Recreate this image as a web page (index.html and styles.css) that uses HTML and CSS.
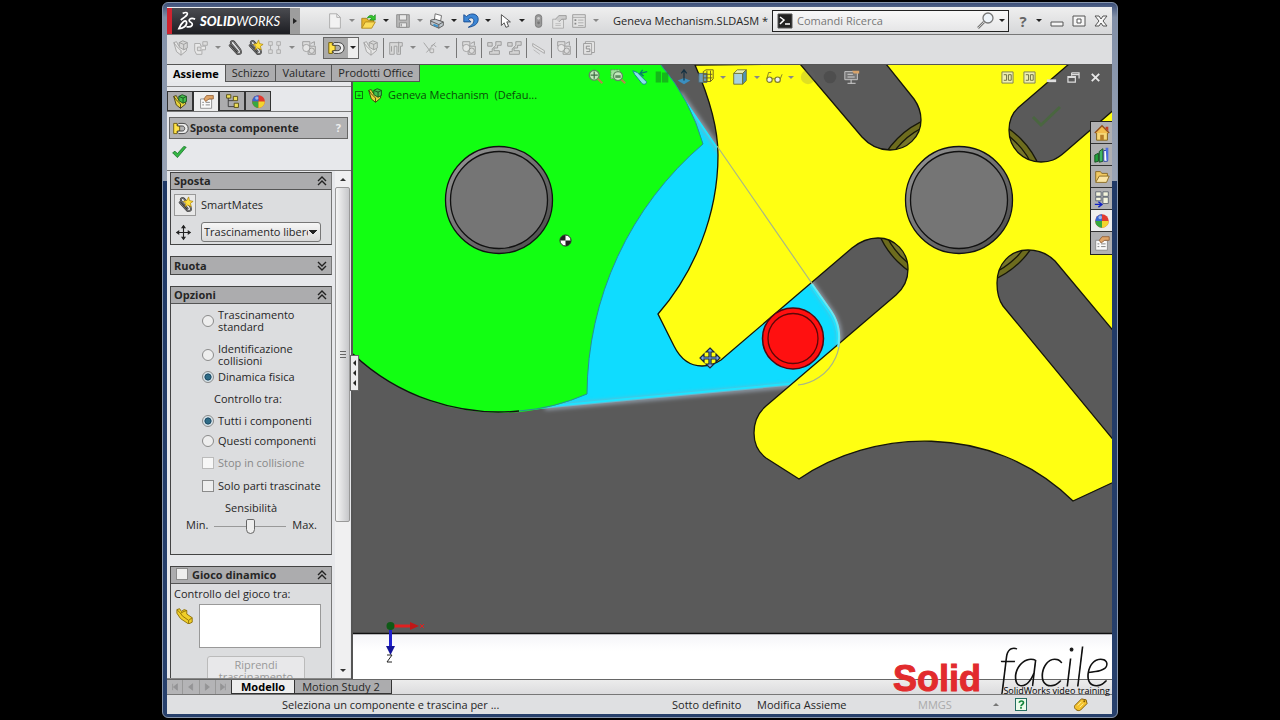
FILE: index.html
```html
<!DOCTYPE html>
<html lang="it">
<head>
<meta charset="utf-8">
<title>Geneva Mechanism.SLDASM</title>
<link rel="stylesheet" href="styles.css">
</head>
<body>
<svg class="defs" aria-hidden="true">
  <symbol id="doc" viewBox="0 0 20 20"><path d="M4 2h8l4 4v12H4z" fill="#f2f2f2" stroke="#aaa"/><path d="M12 2v4h4" fill="none" stroke="#aaa"/></symbol>
  <symbol id="open" viewBox="0 0 20 20"><path d="M2 18V7h5l2 2h6v3" fill="#e8b52c" stroke="#a98420"/><path d="M2 18l4-7h11l-4 7z" fill="#fbdc5a" stroke="#b28a1c"/><path d="M8 7c2-4 5-4 7-2l2-2v6h-6l2-2c-2-1-3-1-5 0z" fill="#35c52f" stroke="#17851a" stroke-width=".7"/></symbol>
  <symbol id="save" viewBox="0 0 20 20"><path d="M3 3h14v14H3z" fill="#b9b9b9" stroke="#8b8b8b"/><path d="M6 3h8v6H6zM6 12h8v5H6z" fill="#e8e8e8" stroke="#8b8b8b"/><path d="M8 13v3" stroke="#777"/></symbol>
  <symbol id="print" viewBox="0 0 20 20"><path d="M7 9l1-7 7 2-1 6z" fill="#fff" stroke="#666"/><path d="M3 9l5-1 9 3v4l-5 3-9-4z" fill="#c0c8ce" stroke="#555"/><path d="M3 10l9 4 5-3M12 14v4" fill="none" stroke="#555"/><path d="M6 14l5 2" stroke="#3c91c8" stroke-width="2"/></symbol>
  <symbol id="undo" viewBox="0 0 20 20"><path d="M2 3v8h8L7 8c3-3 7-1 6 3-1 3-3 4-6 6 7-1 11-4 11-9 0-6-8-8-13-3z" fill="#3d87d6" stroke="#16498e"/></symbol>
  <symbol id="arrow" viewBox="0 0 20 20"><path d="M6 3v12l3-3 2 5 3-1-2-5h4z" fill="#fff" stroke="#444"/></symbol>
  <symbol id="light" viewBox="0 0 20 20"><rect x="6" y="3" width="7" height="14" rx="3" fill="#999" stroke="#777"/><circle cx="9.500" cy="7" r="1.500" fill="#ccc"/><circle cx="9.500" cy="12" r="1.500" fill="#777"/></symbol>
  <symbol id="hand" viewBox="0 0 20 20"><path d="M3 8h12v10H3z" fill="#e3e3e3" stroke="#aaa"/><path d="M6 8l4-4h8v4h-5l-3 3" fill="#ccc" stroke="#999"/><path d="M6 13h6M6 15h6" stroke="#bbb"/></symbol>
  <symbol id="list" viewBox="0 0 20 20"><path d="M3 3h14v14H3z" fill="#e3e3e3" stroke="#999"/><path d="M3 6h14M9 9h6M9 12h6M9 15h6" stroke="#aaa"/><path d="M5 8h2v2H5zM5 12h2v2H5z" fill="#888"/></symbol>
  <symbol id="search" viewBox="0 0 20 20"><circle cx="12" cy="7" r="5" fill="#eef4fa" stroke="#777" stroke-width="1.300"/><path d="M8 11l-6 6" stroke="#777" stroke-width="2.500"/><path d="M8 11l-6 6" stroke="#ccc"/></symbol>
  <symbol id="cmd" viewBox="0 0 16 16"><path d="M1 1h14v14H1z" fill="#222" stroke="#555"/><path d="M3 4l4 3-4 4M8 11h5" fill="none" stroke="#fff" stroke-width="1.500"/></symbol>
  <symbol id="part" viewBox="0 0 20 20"><path d="M2 4l3-1 2 4 4 3 5-2v5l-6 5-5-4z" fill="#e6e6e6" stroke="#a2a2a2"/><path d="M2 4l3 4 5 5v5" fill="none" stroke="#a2a2a2"/><path d="M8 4l4-2 5 2v6l-4 2-5-3z" fill="#d6d6d6" stroke="#9c9c9c"/><path d="M8 4l5 2 4-2M13 6v6" fill="none" stroke="#9c9c9c"/></symbol>
  <symbol id="parts" viewBox="0 0 20 20"><path d="M3 5h6l1 3h5v4h-4v5H5l-2-4z" fill="#e9e9e9" stroke="#a8a8a8"/><path d="M12 3h5v4h-5zM6 9h4v4H6z" fill="#ddd" stroke="#a8a8a8"/></symbol>
  <symbol id="clip" viewBox="0 0 20 20"><g fill="none" stroke-linecap="round"><path d="M13 14L6 6c-2-3 1-5 3-3l7 9c2 4-1 6-4 4L4 7" stroke="#333" stroke-width="2"/><path d="M13 14L6 6c-2-3 1-5 3-3l7 9c2 4-1 6-4 4L4 7" stroke="#bbb" stroke-width=".6"/></g></symbol>
  <symbol id="clipstar" viewBox="0 0 20 20"><use href="#clip"/><path d="M14 1l1 4 4 1-3 2 1 4-4-2-3 2 1-4-3-2 4-1z" fill="#ffe03a" stroke="#a67a00" stroke-width=".7"/></symbol>
  <symbol id="grid" viewBox="0 0 20 20"><path d="M3 3h4v4H3zM12 3h4v4h-4zM3 12h4v4H3zM12 12h4v4h-4zM5 7v5M14 7v5" fill="#ddd" stroke="#aaa"/></symbol>
  <symbol id="move" viewBox="0 0 20 20"><path d="M2 4h4v3h3v6H6v3H2z" fill="#ffe34a" stroke="#6c5700"/><path d="M8 4h5c4 0 6 3 6 6s-2 6-6 6H8l-2-2 2-1h4c4 0 4-6 0-6H8L6 6z" fill="#eee" stroke="#333"/></symbol>
  <symbol id="gears" viewBox="0 0 20 20"><path d="M3 3h8v5H3zM9 8h8v9H9z" fill="#ddd" stroke="#999"/><circle cx="7" cy="10" r="4" fill="#e6e6e6" stroke="#a0a0a0"/><circle cx="13" cy="13" r="3" fill="none" stroke="#999"/><path d="M12 5l4-2v4" fill="none" stroke="#999"/></symbol>
  <symbol id="slot" viewBox="0 0 20 20"><path d="M3 4h14v4h-2v9h-4V8H8v9H3z" fill="#d8d8d8" stroke="#9c9c9c"/><path d="M5 8v6M13 3v12" stroke="#999"/></symbol>
  <symbol id="axis" viewBox="0 0 20 20"><path d="M3 4l9 12M16 4L6 15M11 8l3-2 3 3" fill="none" stroke="#a0a0a0"/><path d="M10 11h4v4h-4z" fill="#ddd" stroke="#aaa"/></symbol>
  <symbol id="explode" viewBox="0 0 20 20"><path d="M3 4h5v4H3zM12 3h6v4h-4v3h-4v3h6v4H5v-3h3v-3l4-4z" fill="#d4d4d4" stroke="#979797"/></symbol>
  <symbol id="measure" viewBox="0 0 20 20"><path d="M3 5l13 8v3L3 8z" fill="#e4e4e4" stroke="#a5a5a5"/><path d="M4 12l7 5" stroke="#b5b5b5"/></symbol>
  <symbol id="sheet" viewBox="0 0 20 20"><path d="M6 3h10v12H6z" fill="#eee" stroke="#999"/><path d="M4 5h9v12H4z" fill="#e3e3e3" stroke="#999"/><path d="M11 8H7v3h4v3H7" fill="none" stroke="#888"/></symbol>
  <symbol id="asm" viewBox="0 0 20 20"><path d="M2 4l3-1 2 4 4 3 5-2v5l-6 5-5-4z" fill="#e8d33a" stroke="#3e3512"/><path d="M2 4l3 4 5 5v5" fill="none" stroke="#3e3512"/><path d="M8 4l4-2 5 2v6l-4 2-5-3z" fill="#45bd4e" stroke="#134c18"/><path d="M8 4l5 2 4-2M13 6v6" fill="none" stroke="#134c18"/></symbol>
  <symbol id="prop" viewBox="0 0 20 20"><path d="M3 7h13v11H3z" fill="#fafafa" stroke="#888"/><path d="M5 11h2M9 11h5M5 14h2M9 14h5" stroke="#777"/><path d="M7 7l3-4h8v4h-5l-4 3z" fill="#e0a568" stroke="#946239"/></symbol>
  <symbol id="tree" viewBox="0 0 20 20"><path d="M5 3v13h7M5 9h6" fill="none" stroke="#333"/><path d="M3 2h5v4H3zM11 4h5v5h-5zM12 12h5v5h-5z" fill="#efe05a" stroke="#4b430f"/></symbol>
  <symbol id="ball" viewBox="0 0 20 20"><circle cx="10" cy="10" r="7.500" fill="#e13a30"/><path d="M10 10V2.500A7.500 7.500 0 0 0 2.500 10z" fill="#3768d0"/><path d="M10 10H2.500A7.500 7.500 0 0 0 10 17.500z" fill="#37a83f"/><path d="M10 10v7.500A7.500 7.500 0 0 0 17.500 10z" fill="#f2d52f"/><circle cx="8" cy="6" r="2" fill="#fff" opacity=".5"/></symbol>
  <symbol id="check" viewBox="0 0 20 20"><path d="M2 11l3-2 3 3 8-9 3 1-11 13z" fill="#35b745" stroke="#147426"/></symbol>
  <symbol id="cross" viewBox="0 0 20 20"><path d="M10 2v16M2 10h16" stroke="#222" stroke-width="1.300"/><path d="M10 1l3 4H7zM10 19l3-4H7zM1 10l4-3v6zM19 10l-4-3v6z" fill="#222"/></symbol>
  <symbol id="yellowpart" viewBox="0 0 20 20"><path d="M1 4l3-1 2 3 3-2 3 1v4l6 4v5l-4 2-9-6-4-6z" fill="#f0cf2a" stroke="#8b6d06"/><path d="M1 4l4 4 2 3 7 5v4M14 16l4-3M5 8l4-2 3-1" fill="none" stroke="#8b6d06"/></symbol>
  <symbol id="up" viewBox="0 0 12 12"><path d="M2 6l4-4 4 4M2 10l4-4 4 4" fill="none" stroke="#222" stroke-width="1.400"/></symbol>
  <symbol id="down" viewBox="0 0 12 12"><path d="M2 2l4 4 4-4M2 6l4 4 4-4" fill="none" stroke="#222" stroke-width="1.400"/></symbol>
  <symbol id="zoomfit" viewBox="0 0 20 20"><circle cx="8" cy="8" r="5.500" fill="#c3e8bd" stroke="#5d8c60" stroke-width="1.600"/><path d="M8 4v8M4 8h8" stroke="#3f6a45" stroke-width="1.300"/><path d="M12 12l5 5" stroke="#b4874d" stroke-width="2.500"/></symbol>
  <symbol id="zoombox" viewBox="0 0 20 20"><path d="M2 2h10v10H2z" fill="#9fe29b" stroke="#5d8c60" stroke-dasharray="2 1"/><circle cx="10" cy="9" r="5" fill="#c3e8bd" stroke="#5d8c60" stroke-width="1.500"/><path d="M7 8h6v3H7z" fill="#5d8c60"/><path d="M14 13l4 4" stroke="#b4874d" stroke-width="2.500"/></symbol>
  <symbol id="prev" viewBox="0 0 20 20"><path d="M2 3l5 2 10 10c1 3-3 4-5 2L4 7z" fill="#8be0ed" stroke="#147f92"/><path d="M10 6l8-2M13 2l-3 4 4 3" fill="none" stroke="#0a7a6e" stroke-width="1.500"/></symbol>
  <symbol id="section" viewBox="0 0 20 20"><path d="M3 4h6v12H3zM10 5h7v11h-7z" fill="#188b20" opacity=".6"/></symbol>
  <symbol id="normal" viewBox="0 0 20 20"><path d="M3 14l7-3 7 3-7 4z" fill="#3a8fc0"/><path d="M10 14V3M7 6l3-4 3 4" fill="none" stroke="#133042" stroke-width="1.300"/></symbol>
  <symbol id="views" viewBox="0 0 20 20"><path d="M2 6h9v10H2z" fill="#6e9dbb" stroke="#4d6975"/><path d="M7 4l3-2h8v10l-3 3H7zM7 7h10M11 3v12M15 3v12M7 11h10" fill="none" stroke="#6a5d20"/></symbol>
  <symbol id="cube" viewBox="0 0 20 20"><path d="M3 6h10v12H3z" fill="#a7d0df" stroke="#6d7130"/><path d="M3 6l4-4h10l-4 4z" fill="#e9efb0" stroke="#6d7130"/><path d="M13 6l4-4v12l-4 4z" fill="#4e94bb" stroke="#6d7130"/></symbol>
  <symbol id="glasses" viewBox="0 0 20 20"><circle cx="5" cy="13" r="3" fill="#eee" stroke="#7e7c26" stroke-width="1.300"/><circle cx="14" cy="13" r="3" fill="#eee" stroke="#7e7c26" stroke-width="1.300"/><path d="M8 12h3M2 12l2-7h3M17 12l2-5" fill="none" stroke="#7e7c26"/></symbol>
  <symbol id="screen" viewBox="0 0 20 20"><path d="M2 4h14v9H2z" fill="#777" stroke="#ccc"/><path d="M5 7h6M5 10h8M9 13v4M5 17h9" stroke="#ddd"/><path d="M10 3h8v3h-6" fill="#d8a36a"/></symbol>
  <symbol id="home" viewBox="0 0 20 20"><path d="M4 9v9h12V9" fill="#f6d777" stroke="#7d5a10"/><path d="M2 10l8-8 8 8" fill="#f3bd4d" stroke="#91501a" stroke-width="1.500"/><path d="M8 12h4v6H8z" fill="#b67d29"/><path d="M14 3h3v5l-3-3z" fill="#bf3d22"/></symbol>
  <symbol id="library" viewBox="0 0 20 20"><path d="M2 10l4-2v9l-4 1z" fill="#22a03a" stroke="#164d20"/><path d="M7 6l4-3v14l-4 1z" fill="#3fb765" stroke="#164d20"/><path d="M12 5h4v12h-4z" fill="#fff" stroke="#223b9d"/><path d="M14 2h3v14h-2z" fill="#4b6ce0"/></symbol>
  <symbol id="folder" viewBox="0 0 20 20"><path d="M3 15V4h5l2 2h6v4" fill="#f1c962" stroke="#86661e"/><path d="M3 16l4-7h11l-3 7z" fill="#fbe5a4" stroke="#86661e"/></symbol>
  <symbol id="palette" viewBox="0 0 20 20"><path d="M3 2h6v5H3zM11 2h6v5h-6zM3 8h6v4H3zM11 8h6v7h-6z" fill="#f3f3dc" stroke="#5b6370"/><path d="M2 16h7M6 13l4 3-4 3" fill="none" stroke="#1020c4" stroke-width="1.500"/></symbol>
  <symbol id="pane" viewBox="0 0 14 14"><path d="M1 1h12v12H1z" fill="#efefb0" stroke="#777b53"/><path d="M3 4h3v6H3M8 4h3v6H8z" fill="none" stroke="#66683e"/></symbol>
  <symbol id="winmin" viewBox="0 0 14 14"><path d="M1 8h12v4H1z" fill="#f5f5f5" stroke="#555"/></symbol>
  <symbol id="winmax" viewBox="0 0 14 14"><path d="M1 2h12v10H1z" fill="#f5f5f5" stroke="#555"/><path d="M5 5h4v4H5z" fill="#fff" stroke="#555"/></symbol>
  <symbol id="winx" viewBox="0 0 14 14"><path d="M1 2h4l2 3 2-3h4L9 7l4 5H9L7 9l-2 3H1l4-5z" fill="#f8f8f8" stroke="#555"/></symbol>
</svg>

<div class="window">
  <header class="titlebar">
    <div class="brand">
      <svg class="ds" viewBox="0 0 22 22" aria-hidden="true"><path d="M7 3c5-2 7 0 2 4l-4 3M3 19c4 0 9-3 8-7-1-3-5 0-8 7zM20 9c-5-2-8 1-5 3 4 2 2 6-4 5" fill="none" stroke="#fff" stroke-width="1.800"/></svg>
      <span class="wordmark"><b>SOLID</b>WORKS</span>
    </div>
    <button class="flyout" aria-label="Menu"></button>
    <div class="tools quick">
      <button aria-label="Nuovo"><svg><use href="#doc"/></svg></button><button class="caret dim" aria-label="Opzioni nuovo"></button>
      <button aria-label="Apri"><svg><use href="#open"/></svg></button><button class="caret" aria-label="Opzioni apri"></button>
      <button aria-label="Salva"><svg><use href="#save"/></svg></button><button class="caret dim" aria-label="Opzioni salva"></button>
      <button aria-label="Stampa"><svg><use href="#print"/></svg></button><button class="caret" aria-label="Opzioni stampa"></button>
      <button aria-label="Annulla"><svg><use href="#undo"/></svg></button><button class="caret" aria-label="Opzioni annulla"></button>
      <button aria-label="Seleziona"><svg><use href="#arrow"/></svg></button><button class="caret" aria-label="Opzioni selezione"></button>
      <button aria-label="Ricostruisci"><svg><use href="#light"/></svg></button>
      <button aria-label="Proprietà"><svg><use href="#hand"/></svg></button>
      <button aria-label="Opzioni"><svg><use href="#list"/></svg></button><button class="caret dim" aria-label="Altre opzioni"></button>
    </div>
    <span class="doctitle">Geneva Mechanism.SLDASM *</span>
    <div class="search">
      <svg class="cmd" aria-hidden="true"><use href="#cmd"/></svg>
      <input type="text" aria-label="Comandi Ricerca" placeholder="Comandi Ricerca">
      <button aria-label="Cerca"><svg><use href="#search"/></svg></button><button class="caret" aria-label="Opzioni ricerca"></button>
    </div>
    <div class="wincontrols">
      <button class="help" aria-label="Guida">?</button><button class="caret" aria-label="Opzioni guida"></button>
      <button class="win" aria-label="Riduci"><svg><use href="#winmin"/></svg></button>
      <button class="win" aria-label="Ingrandisci"><svg><use href="#winmax"/></svg></button>
      <button class="win" aria-label="Chiudi"><svg><use href="#winx"/></svg></button>
    </div>
  </header>

  <div class="tools ribbon">
    <button aria-label="Modifica componente"><svg><use href="#part"/></svg></button>
    <button aria-label="Inserisci componenti"><svg><use href="#parts"/></svg></button><button class="caret dim" aria-label="Opzioni inserisci"></button>
    <button aria-label="Accoppia"><svg><use href="#clip"/></svg></button>
    <button aria-label="Smart Mates"><svg><use href="#clipstar"/></svg></button>
    <button aria-label="Ripetizione"><svg><use href="#grid"/></svg></button><button class="caret dim" aria-label="Opzioni ripetizione"></button>
    <button aria-label="Smart Fasteners"><svg><use href="#gears"/></svg></button>
    <span class="pressed"><button aria-label="Sposta componente" aria-pressed="true"><svg><use href="#move"/></svg></button><button class="caret" aria-label="Opzioni sposta"></button></span>
    <button aria-label="Mostra nascosti"><svg><use href="#part"/></svg></button><i></i>
    <button aria-label="Funzioni assieme"><svg><use href="#slot"/></svg></button><button class="caret dim" aria-label="Opzioni funzioni"></button>
    <button aria-label="Geometria"><svg><use href="#axis"/></svg></button><button class="caret dim" aria-label="Opzioni geometria"></button><i></i>
    <button aria-label="Studio movimento"><svg><use href="#gears"/></svg></button><i></i>
    <button aria-label="Vista esplosa"><svg><use href="#explode"/></svg></button>
    <button aria-label="Schizzo esplosione"><svg><use href="#explode"/></svg></button><i></i>
    <button aria-label="Instant3D"><svg><use href="#measure"/></svg></button><i></i>
    <button aria-label="Aggiorna"><svg><use href="#gears"/></svg></button><i></i>
    <button aria-label="Istantanea"><svg><use href="#sheet"/></svg></button>
  </div>

  <main class="work">
    <aside class="side">
      <nav class="tabs" role="tablist">
        <button role="tab" aria-selected="true">Assieme</button><button role="tab">Schizzo</button><button role="tab">Valutare</button><button role="tab">Prodotti Office</button>
      </nav>
      <div class="paneltabs">
        <button aria-label="Albero"><svg><use href="#asm"/></svg></button><button class="on" aria-label="PropertyManager"><svg><use href="#prop"/></svg></button><button aria-label="Configurazioni"><svg><use href="#tree"/></svg></button><button aria-label="Display"><svg><use href="#ball"/></svg></button>
      </div>
      <div class="pmhead"><svg><use href="#move"/></svg><h1>Sposta componente</h1><button aria-label="Guida">?</button></div>
      <div class="ok"><button aria-label="OK"><svg><use href="#check"/></svg></button></div>
      <div class="scroller">
        <div class="groups">
          <section class="group">
            <h2>Sposta<svg><use href="#up"/></svg></h2>
            <div class="body move">
              <div class="line"><button class="smart" id="smart" aria-label="SmartMates"><svg><use href="#clipstar"/></svg></button><label for="smart">SmartMates</label></div>
              <div class="line"><svg class="crossicon" aria-hidden="true"><use href="#cross"/></svg><select aria-label="Tipo di spostamento"><option>Trascinamento libero</option></select></div>
            </div>
          </section>
          <section class="group"><h2 class="closed">Ruota<svg><use href="#down"/></svg></h2></section>
          <section class="group">
            <h2>Opzioni<svg><use href="#up"/></svg></h2>
            <div class="body options">
              <label class="two"><input type="radio" name="mode"><span>Trascinamento<br>standard</span></label>
              <label class="two"><input type="radio" name="mode"><span>Identificazione<br>collisioni</span></label>
              <label><input type="radio" name="mode" checked><span>Dinamica fisica</span></label>
              <p class="between">Controllo tra:</p>
              <label><input type="radio" name="scope" checked><span>Tutti i componenti</span></label>
              <label><input type="radio" name="scope"><span>Questi componenti</span></label>
              <label class="disabled"><input type="checkbox" disabled><span>Stop in collisione</span></label>
              <label class="only"><input type="checkbox"><span>Solo parti trascinate</span></label>
              <label class="sens" for="sens">Sensibilità</label>
              <div class="slider"><span>Min.</span><input id="sens" type="range" min="0" max="10" value="5"><span>Max.</span></div>
            </div>
          </section>
          <section class="group last">
            <h2><input type="checkbox" id="clearance"><label for="clearance">Gioco dinamico</label><svg><use href="#up"/></svg></h2>
            <div class="body clearance">
              <label for="parts-list">Controllo del gioco tra:</label>
              <div class="pick"><svg aria-hidden="true"><use href="#yellowpart"/></svg><textarea id="parts-list"></textarea></div>
              <button class="resume" disabled>Riprendi<br>trascinamento</button>
            </div>
          </section>
        </div>
        <div class="scrollbar" aria-hidden="true"><b></b><div class="thumb"><span></span></div><b class="dn"></b></div>
      </div>
      <button class="collapse" aria-label="Comprimi pannello"><i></i><i></i><i></i></button>
    </aside>

    <section class="viewport" aria-label="Area grafica">
      <svg class="scene" viewBox="353 65 759 614" preserveAspectRatio="xMinYMin slice" role="img" aria-label="Croce di Malta">
        <defs>
          <linearGradient id="floor" x1="0" y1="0" x2="0" y2="1"><stop offset="0" stop-color="#f4f4f8"/><stop offset=".3" stop-color="#fff"/></linearGradient>
          <linearGradient id="rim" x1="0" y1="0" x2="1" y2="1"><stop offset="0" stop-color="#999"/><stop offset="1" stop-color="#484848"/></linearGradient>
          <filter id="soft" x="-10%" y="-10%" width="120%" height="120%"><feGaussianBlur stdDeviation="2"/></filter>
          <clipPath id="sky"><path d="M353 65h759v568H353z"/></clipPath>
        </defs>
        <path d="M353 65h759v568H353z" fill="#5a5a5a"/>
        <path d="M353 633h759v60H353z" fill="url(#floor)"/>
        <path d="M353 633.500h759" stroke="#111" stroke-width="1.500"/>
        <g clip-path="url(#sky)">
          <path d="M668 76L831 311A47 47 0 0 1 798 385L519 411L560 200Z" fill="#0fdcff"/>
          <path d="M680 93L831 311A47 47 0 0 1 798 385L545 408" fill="none" stroke="#9aa6b4" stroke-width="4" filter="url(#soft)"/>
          <path d="M672 82L829 312A45 45 0 0 1 798 383L530 408" fill="none" stroke="#20e4ff" stroke-width="2"/>
          <circle cx="959" cy="200" r="87" fill="#6d6c1e" stroke="#17170a" stroke-width="1.300"/>
          <circle cx="959" cy="200" r="81" fill="#77762a" stroke="#17170a" stroke-width="1.300"/>
          <path d="M353 65H661A212 212 0 0 1 703 144A331 331 0 0 0 587 394A212 212 0 0 1 353 354Z" fill="#12ff12"/>
          <path d="M519 411A212 212 0 0 1 353 354" fill="none" stroke="#111" stroke-width="1.300"/>
          <path d="M661 65A212 212 0 0 1 703 144A331 331 0 0 0 587 394A212 212 0 0 1 519 411" fill="none" stroke="#268f9c"/>
          <path d="M695 65C706 90 718 122 718 155C718 215 694 273 658 314L674 346C681 360 691 366 702 366C709 366 715 364 721 360L852 248C862 240 870 238 878 238C895 238 908 252 908 269C908 280 904 288 896 295L766 406C758 413 754 423 754 433C754 443 758 452 766 458L799 479C870 430 990 420 1073 501L1116 481V443L1003 306C998 299 997 291 997 283C997 264 1010 250 1028 250C1039 250 1048 254 1055 261L1116 334V108L1065 152C1056 160 1050 162 1041 162C1023 162 1009 148 1009 130C1009 120 1012 113 1019 107L1069 64H886L914 99C919 106 921 112 921 120C921 137 907 150 890 150C879 150 870 146 862 137L800 64Z" fill="#ffff12" stroke="#15150a" stroke-width="1.300"/>
          <path d="M717 146L831 311A47 47 0 0 1 798 385" fill="none" stroke="#a9b787" stroke-width="1.200"/>
          <path d="M812 284L831 311A47 47 0 0 1 838 347" fill="none" stroke="#66e8f5" stroke-width="2"/>
          <circle cx="793" cy="338.500" r="30.500" fill="#ff1010" stroke="#4d0810" stroke-width="1.500"/>
          <circle cx="793" cy="338.500" r="25" fill="none" stroke="#5b0808" stroke-width="1.300"/>
          <g stroke="#111" stroke-width="1.300"><circle cx="499" cy="200" r="53.500" fill="url(#rim)"/><circle cx="499" cy="200" r="48.500" fill="#757575"/><circle cx="959" cy="200" r="53.500" fill="url(#rim)"/><circle cx="959" cy="200" r="48.500" fill="#757575"/></g>
          <path d="M1033 117L1041 125L1060 107" fill="none" stroke="#4a6640" stroke-width="3"/>
        </g>
        <g><circle cx="565.500" cy="240.500" r="5.500" fill="#fff" stroke="#222"/><path d="M565.500 240.500v-5.500a5.500 5.500 0 0 0-5.500 5.500zM565.500 240.500v5.500a5.500 5.500 0 0 0 5.500-5.500z" fill="#222"/></g>
        <path d="M710 348l4 4h-3v5h5v-3l4 4-4 4v-3h-5v5h3l-4 4-4-4h3v-5h-5v3l-4-4 4-4v3h5v-5h-3z" fill="#79a8ee" stroke="#1c2938" stroke-width="1.200"/>
        <path d="M394 626h17" stroke="#e02020" stroke-width="3"/><path d="M410 622l9 4-9 4z" fill="#c01818"/><path d="M420 624l4 4M424 624l-4 4" stroke="#e02020"/>
        <path d="M390.500 629v17" stroke="#2121d0" stroke-width="3"/><path d="M386 646h9l-4.500 9z" fill="#14149a"/><circle cx="390.500" cy="626" r="4" fill="#0e5a16"/>
        <path d="M387 655h5l-5 7h5" fill="none" stroke="#222"/>
      </svg>
      <div class="treeline"><button aria-label="Espandi">+</button><svg aria-hidden="true"><use href="#asm"/></svg><span>Geneva Mechanism&nbsp; (Defau...</span></div>
      <div class="tools hud">
        <button aria-label="Zoom adatta"><svg><use href="#zoomfit"/></svg></button><button aria-label="Zoom area"><svg><use href="#zoombox"/></svg></button><button aria-label="Vista precedente"><svg><use href="#prev"/></svg></button><button aria-label="Sezione"><svg><use href="#section"/></svg></button><button aria-label="Normale a"><svg><use href="#normal"/></svg></button><button aria-label="Orientamento"><svg><use href="#views"/></svg></button><button class="caret dim" aria-label="Orientamenti"></button><button aria-label="Stile"><svg><use href="#cube"/></svg></button><button class="caret dim" aria-label="Stili"></button><button aria-label="Nascondi o mostra"><svg><use href="#glasses"/></svg></button><button class="caret dim" aria-label="Elementi"></button><button class="faded" aria-label="Aspetto"><svg viewBox="0 0 20 20"><circle cx="10" cy="10" r="8" fill="#666"/></svg></button><button class="faded" aria-label="Scena"><svg viewBox="0 0 20 20"><circle cx="10" cy="10" r="7" fill="#222"/></svg></button><button aria-label="Impostazioni vista"><svg><use href="#screen"/></svg></button>
      </div>
      <div class="childcontrols">
        <button aria-label="Pannello sinistro"><svg viewBox="0 0 14 14"><use href="#pane"/></svg></button><button aria-label="Pannello destro"><svg viewBox="0 0 14 14"><use href="#pane"/></svg></button><button aria-label="Riduci documento"><svg viewBox="0 0 14 14"><path d="M2 9h10v3H2z" fill="#ddd"/></svg></button><button aria-label="Ripristina documento"><svg viewBox="0 0 14 14"><path d="M5 2h8v6M5 4h8M5 2v3M1 6h8v6H1zM1 7h8" fill="none" stroke="#ddd" stroke-width="1.300"/></svg></button><button aria-label="Chiudi documento"><svg viewBox="0 0 14 14"><path d="M3 3l8 8M11 3l-8 8" stroke="#e8e8e8" stroke-width="2"/></svg></button>
      </div>
      <div class="taskpane">
        <button aria-label="Risorse"><svg><use href="#home"/></svg></button><button aria-label="Libreria"><svg><use href="#library"/></svg></button><button aria-label="Esplora file"><svg><use href="#folder"/></svg></button><button aria-label="Tavolozza viste"><svg><use href="#palette"/></svg></button><button class="on" aria-label="Aspetti"><svg><use href="#ball"/></svg></button><button aria-label="Proprietà personalizzate"><svg><use href="#prop"/></svg></button>
      </div>
    </section>
  </main>

  <div class="sheets">
    <div class="vcr">
      <button aria-label="Primo"><svg viewBox="0 0 10 10"><path d="M2 1v8M8 1v8L3 5z"/></svg></button><button aria-label="Precedente"><svg viewBox="0 0 10 10"><path d="M7 1v8L2 5z"/></svg></button><button aria-label="Successivo"><svg viewBox="0 0 10 10"><path d="M3 1v8l5-4z"/></svg></button><button aria-label="Ultimo"><svg viewBox="0 0 10 10"><path d="M8 1v8M2 1v8l5-4z"/></svg></button>
    </div>
    <button class="on">Modello</button><button class="study">Motion Study 2</button>
  </div>
  <footer class="status">
    <span class="hint">Seleziona un componente e trascina per ...</span>
    <span class="state">Sotto definito</span><span class="edit">Modifica Assieme</span><span class="units">MMGS</span><i class="tri"></i>
    <button class="qm" aria-label="Guida rapida"><svg viewBox="0 0 12 12"><path d="M4 4c0-3 5-3 5 0 0 2-3 2-3 4M6 9v2" fill="none" stroke="#12843a" stroke-width="2"/></svg></button>
    <button class="tag" aria-label="Etichette"><svg viewBox="0 0 16 16"><path d="M2 9l7-7 5 1 1 4-7 7c-3 2-8-2-6-5z" fill="#f3c12d" stroke="#805b05"/><circle cx="12" cy="4.500" r="1" fill="#805b05"/><path d="M5 9l4-4M7 11l4-4" stroke="#fff3a0"/></svg></button>
  </footer>

  <div class="watermark"><strong>Solid</strong><div class="facile"><em>facile</em><small>SolidWorks video training</small></div></div>
</div>
</body>
</html>
```
FILE: styles.css
```css
* { box-sizing: border-box; }
html, body { margin: 0; height: 100%; background: #000; }
body {
  padding: 2px 162px;
  font: 11px/12px "Open Sans", "Noto Sans", sans-serif;
  color: #262626;
  overflow: hidden;
}
button, input, select, textarea { font: inherit; color: inherit; margin: 0; }
button { padding: 0; border: 0; background: none; display: block; }
h1, h2, p { margin: 0; font-size: 11px; }
.defs { position: absolute; width: 0; height: 0; }

.window {
  position: relative;
  height: 100%;
  min-height: 716px;
  display: flex;
  flex-direction: column;
  padding: 4px 5px 3px 4px;
  border: 1px solid #8796ad;
  border-radius: 6px;
  background: linear-gradient(#3c4f78, #8290a8 2%, #9aa4b5 25%, #1f3865 25%, #27406c);
}
.titlebar {
  flex: none;
  height: 28px;
  display: flex;
  align-items: center;
  background: linear-gradient(#efefef, #d6d7d9);
  border-bottom: 1px solid #777;
}
.brand {
  width: 123px;
  height: 26px;
  display: flex;
  align-items: center;
  gap: 3px;
  padding-left: 4px;
  border-left: 5px solid #cf2430;
  background: linear-gradient(#4a4b50, #1d1e23);
  color: #fff;
}
.ds { width: 21px; height: 22px; }
.wordmark { font: italic 400 13px/16px Lato, sans-serif; }
.wordmark b { font-weight: 900; }
.flyout { width: 10px; height: 26px; background: #9d9d9d; display: grid; place-items: center; }
.flyout::before { content: ""; border: 3px solid transparent; border-left: 4px solid #222; border-right: 0; }

.tools { display: flex; align-items: center; }
.tools button, .tools svg { flex: none; width: 20px; height: 20px; }
.tools svg { display: block; padding: 1px; }
.tools .caret, .caret { width: 14px; height: 20px; display: grid; place-items: center; }
.caret::before { content: ""; border: 3px solid transparent; border-top-color: #222; border-bottom: 0; }
.caret.dim::before { border-top-color: #888; }
.quick { margin-left: 25px; }
.doctitle { margin-left: 10px; white-space: nowrap; }
.search {
  width: 237px;
  height: 22px;
  margin-left: auto;
  display: flex;
  align-items: center;
  border: 1px solid #222;
  background: linear-gradient(#f8f8f8, #e6e6e7);
}
.cmd { width: 16px; height: 16px; margin: 0 4px; }
.search input { flex: 1; min-width: 0; border: 0; padding: 0; background: none; }
.search input::placeholder { color: #777; opacity: 1; }
.search button svg { display: block; width: 20px; height: 20px; }
.search .caret { width: 12px; }
.wincontrols { display: flex; align-items: center; padding-left: 5px; }
.win { width: 22px; }
.win svg { width: 14px; height: 14px; display: block; margin: auto; }
.help { width: 18px; font: bold 15px/16px "Open Sans", sans-serif; color: #666; }

.ribbon {
  flex: none;
  height: 30px;
  padding: 0 4px 4px;
  background: #dddee0;
  border-bottom: 1px solid #555;
}
.ribbon > i { width: 1px; height: 20px; margin: 0 2px; background: #777; }
.pressed { display: flex; border: 1px solid #666; background: #eee; margin: 0 2px; }
.ribbon .pressed { margin-left: 4px; }
.pressed button:first-child { width: 24px; background: #aaa; padding-left: 2px; }
.pressed .caret { width: 10px; }

.work { flex: 1; min-height: 0; display: flex; }
.side {
  position: relative;
  z-index: 2;
  flex: none;
  width: 186px;
  display: flex;
  flex-direction: column;
  background: #e7e8eb;
  border-right: 2px solid #555;
}
.tabs { display: flex; width: max-content; height: 17px; flex: none; }
.tabs button {
  padding: 0 6px;
  height: 17px;
  line-height: 14px;
  white-space: nowrap;
  background: #acacae;
  border: 1px solid #555;
  border-top: 0;
  border-left: 0;
}
.tabs button[aria-selected] { background: #e9eaec; font-weight: bold; border-bottom: 0; color: #000; }
.paneltabs {
  flex: none;
  display: flex;
  height: 26px;
  margin-top: 4px;
  padding-top: 4px;
  border-top: 1px solid #888;
  border-bottom: 1px solid #777;
}
.paneltabs button { width: 26px; background: #acacae; border: 1px solid #333; }
.paneltabs button.on { background: #eee; border-bottom: 0; }
.paneltabs svg { display: block; width: 17px; height: 17px; margin: auto; }
.pmhead {
  flex: none;
  display: flex;
  align-items: center;
  height: 22px;
  margin: 5px 3px 0 2px;
  padding: 0 6px 0 2px;
  gap: 1px;
  background: #b2b2b4;
  border: 1px solid #666;
}
.pmhead svg { width: 17px; height: 17px; }
.pmhead h1 { flex: 1; }
.pmhead button { font-weight: bold; color: #eee; }
.ok { flex: none; height: 32px; padding: 5px 4px; border-bottom: 1px solid #777; }
.ok svg { display: block; width: 16px; height: 16px; }
.scroller { flex: 1; min-height: 0; display: flex; justify-content: space-between; border-bottom: 1px solid #888; }
.groups { width: 162px; margin-left: 3px; padding-top: 1px; overflow: hidden; display: flex; flex-direction: column; gap: 11px; }
.group { flex: none; border: 1px solid #444; border-right-color: #777; background: #dcdddf; }
.group h2 {
  display: flex;
  align-items: center;
  height: 17px;
  padding: 0 3px;
  background: #acacae;
  border-bottom: 1px solid #555;
}
.group h2.closed { border: 0; }
.group h2 svg { width: 12px; height: 12px; margin-left: auto; }
.group h2 input { margin: 0 4px 2px 2px; }
.move { height: 54px; padding: 4px 3px; display: flex; flex-direction: column; gap: 6px; }
.line { display: flex; align-items: center; gap: 5px; height: 22px; }
.smart { width: 22px; height: 22px; border: 1px solid #999; background: #e8e8e8; }
.smart svg { display: block; width: 18px; height: 18px; margin: auto; }
.crossicon { width: 17px; height: 17px; margin: 0 4px 0 1px; }
select {
  appearance: none;
  width: 120px;
  height: 20px;
  padding: 0 12px 0 2px;
  border: 1px solid #777;
  border-radius: 3px;
  background:
    linear-gradient(to bottom right, #222 50%, transparent 50%) 111px 7px / 4px 5px no-repeat,
    linear-gradient(to bottom left, #222 50%, transparent 50%) 107px 7px / 4px 5px no-repeat,
    linear-gradient(#f6f6f6, #d9d9d9);
}
.options { height: 250px; padding: 5px 0 0 31px; display: flex; flex-direction: column; }
.options label { display: flex; align-items: center; gap: 4px; height: 20px; white-space: nowrap; flex: none; }
.options .two { height: 24px; margin-bottom: 10px; }
.options .two + .two { margin-bottom: 0; }
input[type="radio"], input[type="checkbox"] { appearance: none; flex: none; width: 12px; height: 12px; border: 1px solid #8b8b8b; background: #eee; }
input[type="radio"] { border-radius: 50%; }
input[type="radio"]:checked { background: radial-gradient(#2e6b86 0 30%, #16405c 45%, #d7e4ea 55%); }
input[type="checkbox"]:disabled { border-color: #bbb; background: #f7f7f7; }
.between { height: 20px; margin: 2px 0; padding-left: 12px; line-height: 20px; }
.options .disabled { color: #888; margin-top: 2px; }
.options .only { margin-top: 3px; }
.options .sens { justify-content: center; margin: 2px 31px 0 0; }
.slider { display: flex; align-items: center; justify-content: space-between; height: 16px; margin: 0 14px 0 -16px; flex: none; }
.slider span { margin-top: -2px; }
.slider input { appearance: none; width: 72px; height: 16px; background: linear-gradient(#999, #999) center / 100% 1px no-repeat; }
.slider input::-webkit-slider-thumb { appearance: none; width: 9px; height: 15px; border: 1px solid #666; border-radius: 2px 2px 5px 5px; background: #eee; }
.clearance { display: flex; flex-direction: column; padding: 4px 3px 0; height: 110px; }
.pick { display: flex; gap: 4px; margin-top: 4px; align-items: flex-start; }
.pick svg { width: 18px; height: 18px; margin: 2px 1px 0 2px; }
textarea { width: 122px; height: 44px; border: 1px solid #999; background: #fff; resize: none; display: block; }
.resume { width: 98px; height: 30px; margin: 8px 0 0 33px; border: 1px solid #bbb; border-radius: 3px; background: #e8e8ea; color: #999; flex: none; }
.scrollbar { width: 15px; margin-right: 1px; display: flex; flex-direction: column; background: #f0f0f1; }
.scrollbar b { height: 16px; display: grid; place-items: center; flex: none; }
.scrollbar b::before { content: ""; border: 3px solid transparent; border-bottom-color: #333; border-top: 0; }
.scrollbar .dn { margin-top: auto; }
.scrollbar .dn::before { border: 3px solid transparent; border-top-color: #333; border-bottom: 0; }
.thumb { flex: 0 0 66%; border: 1px solid #999; border-radius: 2px; background: linear-gradient(to right, #f5f5f5, #c6c7ca); display: grid; place-items: center; }
.thumb span { width: 6px; height: 7px; background: repeating-linear-gradient(#666 0 1px, transparent 1px 3px); }
.collapse {
  position: absolute;
  right: -8px;
  top: 290px;
  width: 9px;
  height: 36px;
  display: flex;
  flex-direction: column;
  justify-content: space-evenly;
  align-items: center;
  background: #ececee;
  border: 1px solid #666;
}
.collapse i { border: 3px solid transparent; border-right-color: #222; border-left: 0; }

.viewport { position: relative; flex: 1; min-width: 0; overflow: hidden; background: #5a5a5a; }
.scene { display: block; width: 100%; height: 100%; }
.treeline { position: absolute; left: 2px; top: 21px; display: flex; align-items: center; gap: 4px; height: 18px; color: #0a4d0a; }
.treeline button { width: 8px; height: 8px; border: 1px solid #0b7a0b; font-size: 8px; line-height: 6px; }
.treeline svg { width: 17px; height: 17px; }
.hud { position: absolute; left: 233px; top: 2px; gap: 2px; }
.tools.hud .caret { width: 10px; }
.tools.hud .faded { opacity: .2; }
.childcontrols { position: absolute; right: 6px; top: 2px; display: flex; }
.childcontrols button { width: 22px; height: 20px; }
.childcontrols svg { display: block; width: 13px; height: 13px; margin: auto; }
.taskpane { position: absolute; right: 0; top: 56px; width: 22px; border: 1px solid #222; border-right: 0; }
.taskpane button { width: 21px; height: 22px; background: #b0b0b2; border-bottom: 1px solid #333; }
.taskpane button:last-child { border: 0; }
.taskpane .on { background: #eee; }
.taskpane svg { display: block; width: 18px; height: 18px; margin: auto; }

.sheets { flex: none; display: flex; height: 16px; background: linear-gradient(#ececec, #dcdcde); border-top: 1px solid #666; border-bottom: 1px solid #777; }
.sheets > button { padding: 0 9px; line-height: 13px; background: #acacae; border: 1px solid #333; border-top: 0; margin-left: -1px; }
.sheets > button.on { background: #eee; font-weight: bold; color: #000; }
.sheets > .study { padding: 0 11px 0 7px; }
.vcr { display: flex; width: 65px; background: #b4b4b6; }
.vcr button { flex: 1; border-right: 1px solid #999; }
.vcr svg { display: block; width: 8px; height: 8px; margin: auto; fill: #949496; stroke: #949496; }
.status { flex: none; display: flex; align-items: center; height: 19px; padding: 0 23px 0 115px; background: #dfe0e2; white-space: nowrap; }
.hint { flex: 1; }
.state { width: 85px; }
.edit { width: 161px; }
.units { width: 75px; color: #aaa; }
.tri { border: 3px solid transparent; border-bottom-color: #777; border-top: 0; margin-right: 16px; }
.qm { width: 12px; height: 13px; border: 1px solid #256d61; background: #eafbea; }
.qm svg { display: block; width: 10px; height: 11px; }
.tag { width: 16px; margin-left: 46px; }
.tag svg { display: block; width: 15px; height: 15px; }

.watermark { position: absolute; right: 7px; bottom: 20px; display: flex; align-items: flex-end; color: #111; pointer-events: none; z-index: 3; }
.watermark strong { font: bold 36px/36px "Liberation Sans", Arial, sans-serif; color: #e22b2d; -webkit-text-stroke: 1px #e22b2d; }
.facile { width: 129px; display: flex; flex-direction: column; align-items: flex-end; }
.facile em { font: italic 100 54px/38px Lato, sans-serif; -webkit-text-stroke: 1px #111; }
.facile small { font: 9px/12px "Open Sans", sans-serif; white-space: nowrap; color: #000; }
```
